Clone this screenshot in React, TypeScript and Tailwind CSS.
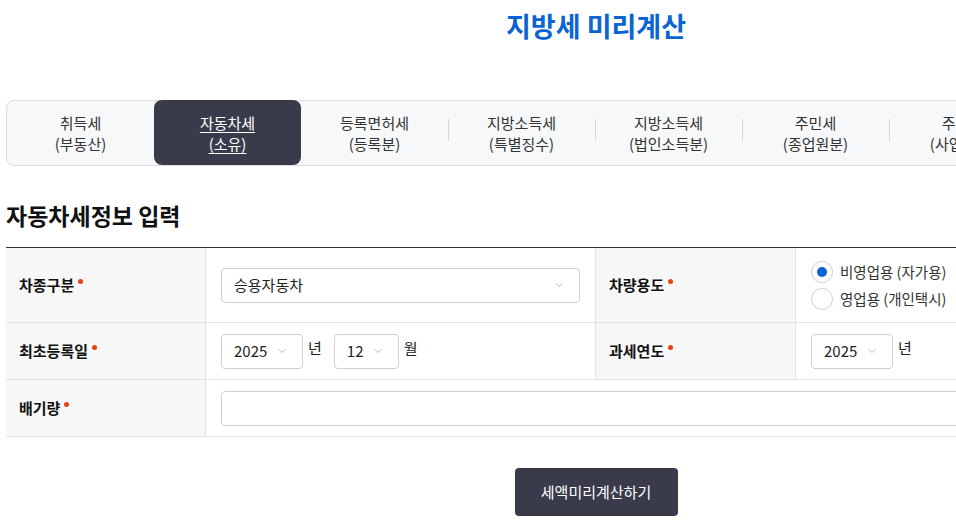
import { ChevronDown } from "lucide-react";

const tabs = [
  ["취득세", "(부동산)"],
  ["자동차세", "(소유)"],
  ["등록면허세", "(등록분)"],
  ["지방소득세", "(특별징수)"],
  ["지방소득세", "(법인소득분)"],
  ["주민세", "(종업원분)"],
  ["주민세", "(사업소분)"],
  ["재산세", "(부동산)"],
];

const font = { fontFamily: '"Noto Sans CJK KR", "Noto Sans", sans-serif' };

function Label({ text }: { text: string }) {
  return (
    <div className="w-[199px] shrink-0 bg-[#f7f7f7] px-[13px] flex items-center text-[15px] font-bold text-[#111]">
      <span className="relative pr-[9px]">
        {text}
        <span className="absolute right-0 top-[5px] w-[5px] h-[5px] rounded-full bg-[#e8420e]" />
      </span>
    </div>
  );
}

function Select({ value, w }: { value: string; w: string }) {
  return (
    <div className={`${w} h-[35px] border border-[#cfcfcf] rounded-[4px] bg-white flex items-center justify-between pl-[12px] pr-[14px] text-[15px] text-[#222]`}>
      <span>{value}</span>
      <ChevronDown size={12} strokeWidth={1.5} className="text-[#999]" />
    </div>
  );
}

export default function App() {
  return (
    <div className="w-[956px] h-[523px] overflow-hidden bg-white" style={font}>
      <div className="w-[1180px] ml-[6px]">
        <h1 className="text-center text-[27px] font-bold text-[#0a64d2] pt-[4px] leading-[44px]">지방세 미리계산</h1>

        {/* Tabs */}
        <div className="mt-[52px] h-[66px] border border-[#dcdcdc] rounded-[8px] bg-[#f7f8fa] flex">
          {tabs.map(([a, b], i) => {
            const active = i === 1;
            const showDivider = i > 2;
            return (
              <div key={i} className="w-[147px] shrink-0 relative">
                {showDivider && <span className="absolute left-0 top-[18px] h-[22px] w-px bg-[#d6d6d6]" />}
                <div
                  className={
                    active
                      ? "h-[65px] -mt-px rounded-[8px] bg-[#393b4a] text-white flex flex-col items-center justify-center text-[15px] leading-[21px] underline underline-offset-[3px]"
                      : "h-full flex flex-col items-center justify-center text-[15px] leading-[21px] text-[#333]"
                  }
                >
                  <span>{a}</span>
                  <span>{b}</span>
                </div>
              </div>
            );
          })}
        </div>

        <h2 className="mt-[33px] text-[23px] font-bold text-[#111] leading-[32px]">자동차세정보 입력</h2>

        {/* Form table */}
        <div className="mt-[16px] border-t border-[#333]">
          <div className="flex h-[75px] border-b border-[#e3e3e3]">
            <Label text="차종구분" />
            <div className="w-[391px] shrink-0 border-l border-r border-[#e3e3e3] flex items-center pl-[15px]">
              <Select value="승용자동차" w="w-[359px]" />
            </div>
            <Label text="차량용도" />
            <div className="flex-1 border-l border-[#e3e3e3] flex flex-col justify-center gap-[5px] pl-[15px] text-[14.5px] text-[#333]">
              <label className="flex items-center gap-[7px]">
                <span className="w-[22px] h-[22px] rounded-full border border-[#cfcfcf] flex items-center justify-center bg-white">
                  <span className="w-[10px] h-[10px] rounded-full bg-[#0a64d2]" />
                </span>
                비영업용 (자가용)
              </label>
              <label className="flex items-center gap-[7px]">
                <span className="w-[22px] h-[22px] rounded-full border border-[#cfcfcf] bg-white" />
                영업용 (개인택시)
              </label>
            </div>
          </div>

          <div className="flex h-[57px] border-b border-[#e3e3e3]">
            <Label text="최초등록일" />
            <div className="w-[391px] shrink-0 border-l border-r border-[#e3e3e3] flex items-center pl-[15px] text-[15px] text-[#222]">
              <Select value="2025" w="w-[82px]" />
              <span className="ml-[5px] mr-[12px] -mt-[6px]">년</span>
              <Select value="12" w="w-[65px]" />
              <span className="ml-[5px] -mt-[6px]">월</span>
            </div>
            <Label text="과세연도" />
            <div className="flex-1 border-l border-[#e3e3e3] flex items-center pl-[15px] text-[15px] text-[#222]">
              <Select value="2025" w="w-[82px]" />
              <span className="ml-[5px] -mt-[6px]">년</span>
            </div>
          </div>

          <div className="flex h-[57px] border-b border-[#e3e3e3]">
            <Label text="배기량" />
            <div className="flex-1 border-l border-[#e3e3e3] flex items-center pl-[15px]">
              <div className="w-[965px] h-[35px] border border-[#cfcfcf] rounded-[4px] bg-white" />
            </div>
          </div>
        </div>

        <div className="flex justify-center mt-[31px]">
          <button className="w-[163px] h-[48px] rounded-[4px] bg-[#393b4a] text-white text-[15px]">세액미리계산하기</button>
        </div>
      </div>
    </div>
  );
}
